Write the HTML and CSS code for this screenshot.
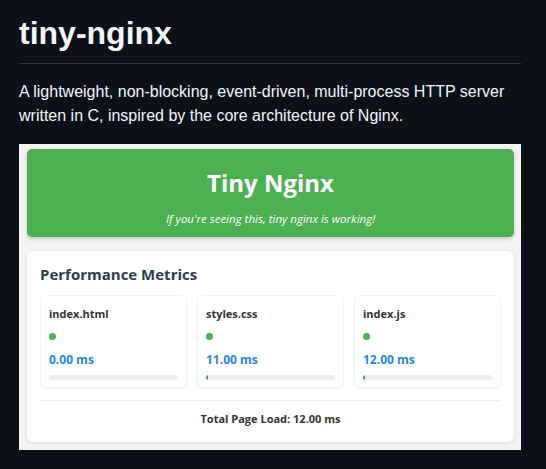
FILE: index.html
```html
<!DOCTYPE html>
<html lang="en">
<head>
<meta charset="utf-8">
<title>tiny-nginx</title>
<link rel="stylesheet" href="styles.css">
</head>
<body>
<article class="readme">
  <h1 class="title">tiny-nginx</h1>
  <p class="intro">A lightweight, non-blocking, event-driven, multi-process HTTP server written in C, inspired by the core architecture of Nginx.</p>
  <div class="shot">
    <header class="hero">
      <div class="hero-title">Tiny Nginx</div>
      <div class="hero-sub">If you're seeing this, tiny nginx is working!</div>
    </header>
    <section class="metrics">
      <h2 class="metrics-title">Performance Metrics</h2>
      <div class="cards">
        <div class="card">
          <div class="file">index.html</div>
          <div class="dot"></div>
          <div class="ms">0.00 ms</div>
          <div class="bar"><div class="fill" style="width:0%"></div></div>
        </div>
        <div class="card">
          <div class="file">styles.css</div>
          <div class="dot"></div>
          <div class="ms">11.00 ms</div>
          <div class="bar"><div class="fill" style="width:1.6%"></div></div>
        </div>
        <div class="card">
          <div class="file">index.js</div>
          <div class="dot"></div>
          <div class="ms">12.00 ms</div>
          <div class="bar"><div class="fill" style="width:1.7%"></div></div>
        </div>
      </div>
      <div class="divider"></div>
      <div class="total">Total Page Load: 12.00 ms</div>
    </section>
  </div>
</article>
</body>
</html>
```

FILE: styles.css
```css
html, body {
  margin: 0;
  padding: 0;
  background: #0d1117;
}
.readme {
  padding: 13px 25px 0 19px;
  font-family: "Liberation Sans", Arial, sans-serif;
  color: #f0f6fc;
}
.title {
  margin: 0;
  font-size: 32px;
  line-height: 40px;
  font-weight: 700;
  padding-bottom: 10px;
  border-bottom: 1px solid #30363d;
}
.intro {
  margin: 16px 0 16px;
  font-size: 16px;
  line-height: 24px;
}
.shot {
  width: 502px;
  height: 306px;
  box-sizing: border-box;
  background: #f4f4f4;
  padding: 5px 7px 8px 8px;
  display: flex;
  flex-direction: column;
  gap: 14px;
  font-family: "Open Sans", "Noto Sans", sans-serif;
}
.hero {
  height: 88px;
  box-sizing: border-box;
  background: #4caf50;
  border-radius: 5px;
  box-shadow: 0 2px 4px rgba(0,0,0,0.18);
  color: #fff;
  text-align: center;
  padding-top: 19px;
}
.hero-title {
  font-size: 24px;
  line-height: 30px;
  font-weight: 700;
}
.hero-sub {
  margin-top: 14px;
  font-size: 11.5px;
  line-height: 14px;
  font-style: italic;
}
.metrics {
  height: 191px;
  box-sizing: border-box;
  background: #fff;
  border-radius: 6px;
  box-shadow: 0 1px 4px rgba(0,0,0,0.1);
  padding: 13px 13px 0 13px;
}
.metrics-title {
  margin: 0 0 11px;
  font-size: 15px;
  line-height: 20px;
  font-weight: 700;
  color: #2c3e50;
}
.cards {
  display: flex;
  gap: 10px;
}
.card {
  flex: 1;
  height: 93px;
  box-sizing: border-box;
  border-radius: 6px;
  border: 1px solid #f3f3f3;
  box-shadow: 0 1px 2px rgba(0,0,0,0.05);
  padding: 11px 8px 0 8px;
}
.file {
  font-size: 11px;
  line-height: 14px;
  font-weight: 700;
  color: #333;
}
.dot {
  margin-top: 12px;
  width: 7px;
  height: 7px;
  border-radius: 50%;
  background: #4caf50;
}
.ms {
  margin-top: 12px;
  font-size: 12px;
  line-height: 16px;
  font-weight: 700;
  color: #1e88e5;
}
.bar {
  margin-top: 7px;
  height: 5px;
  border-radius: 3px;
  background: #eeeeee;
  overflow: hidden;
}
.fill {
  height: 100%;
  background: #26a69a;
  border-radius: 3px;
}
.divider {
  margin-top: 12px;
  height: 1px;
  background: #eeeeee;
}
.total {
  margin-top: 11px;
  text-align: center;
  font-size: 11px;
  line-height: 14px;
  font-weight: 700;
  color: #333;
}
```
